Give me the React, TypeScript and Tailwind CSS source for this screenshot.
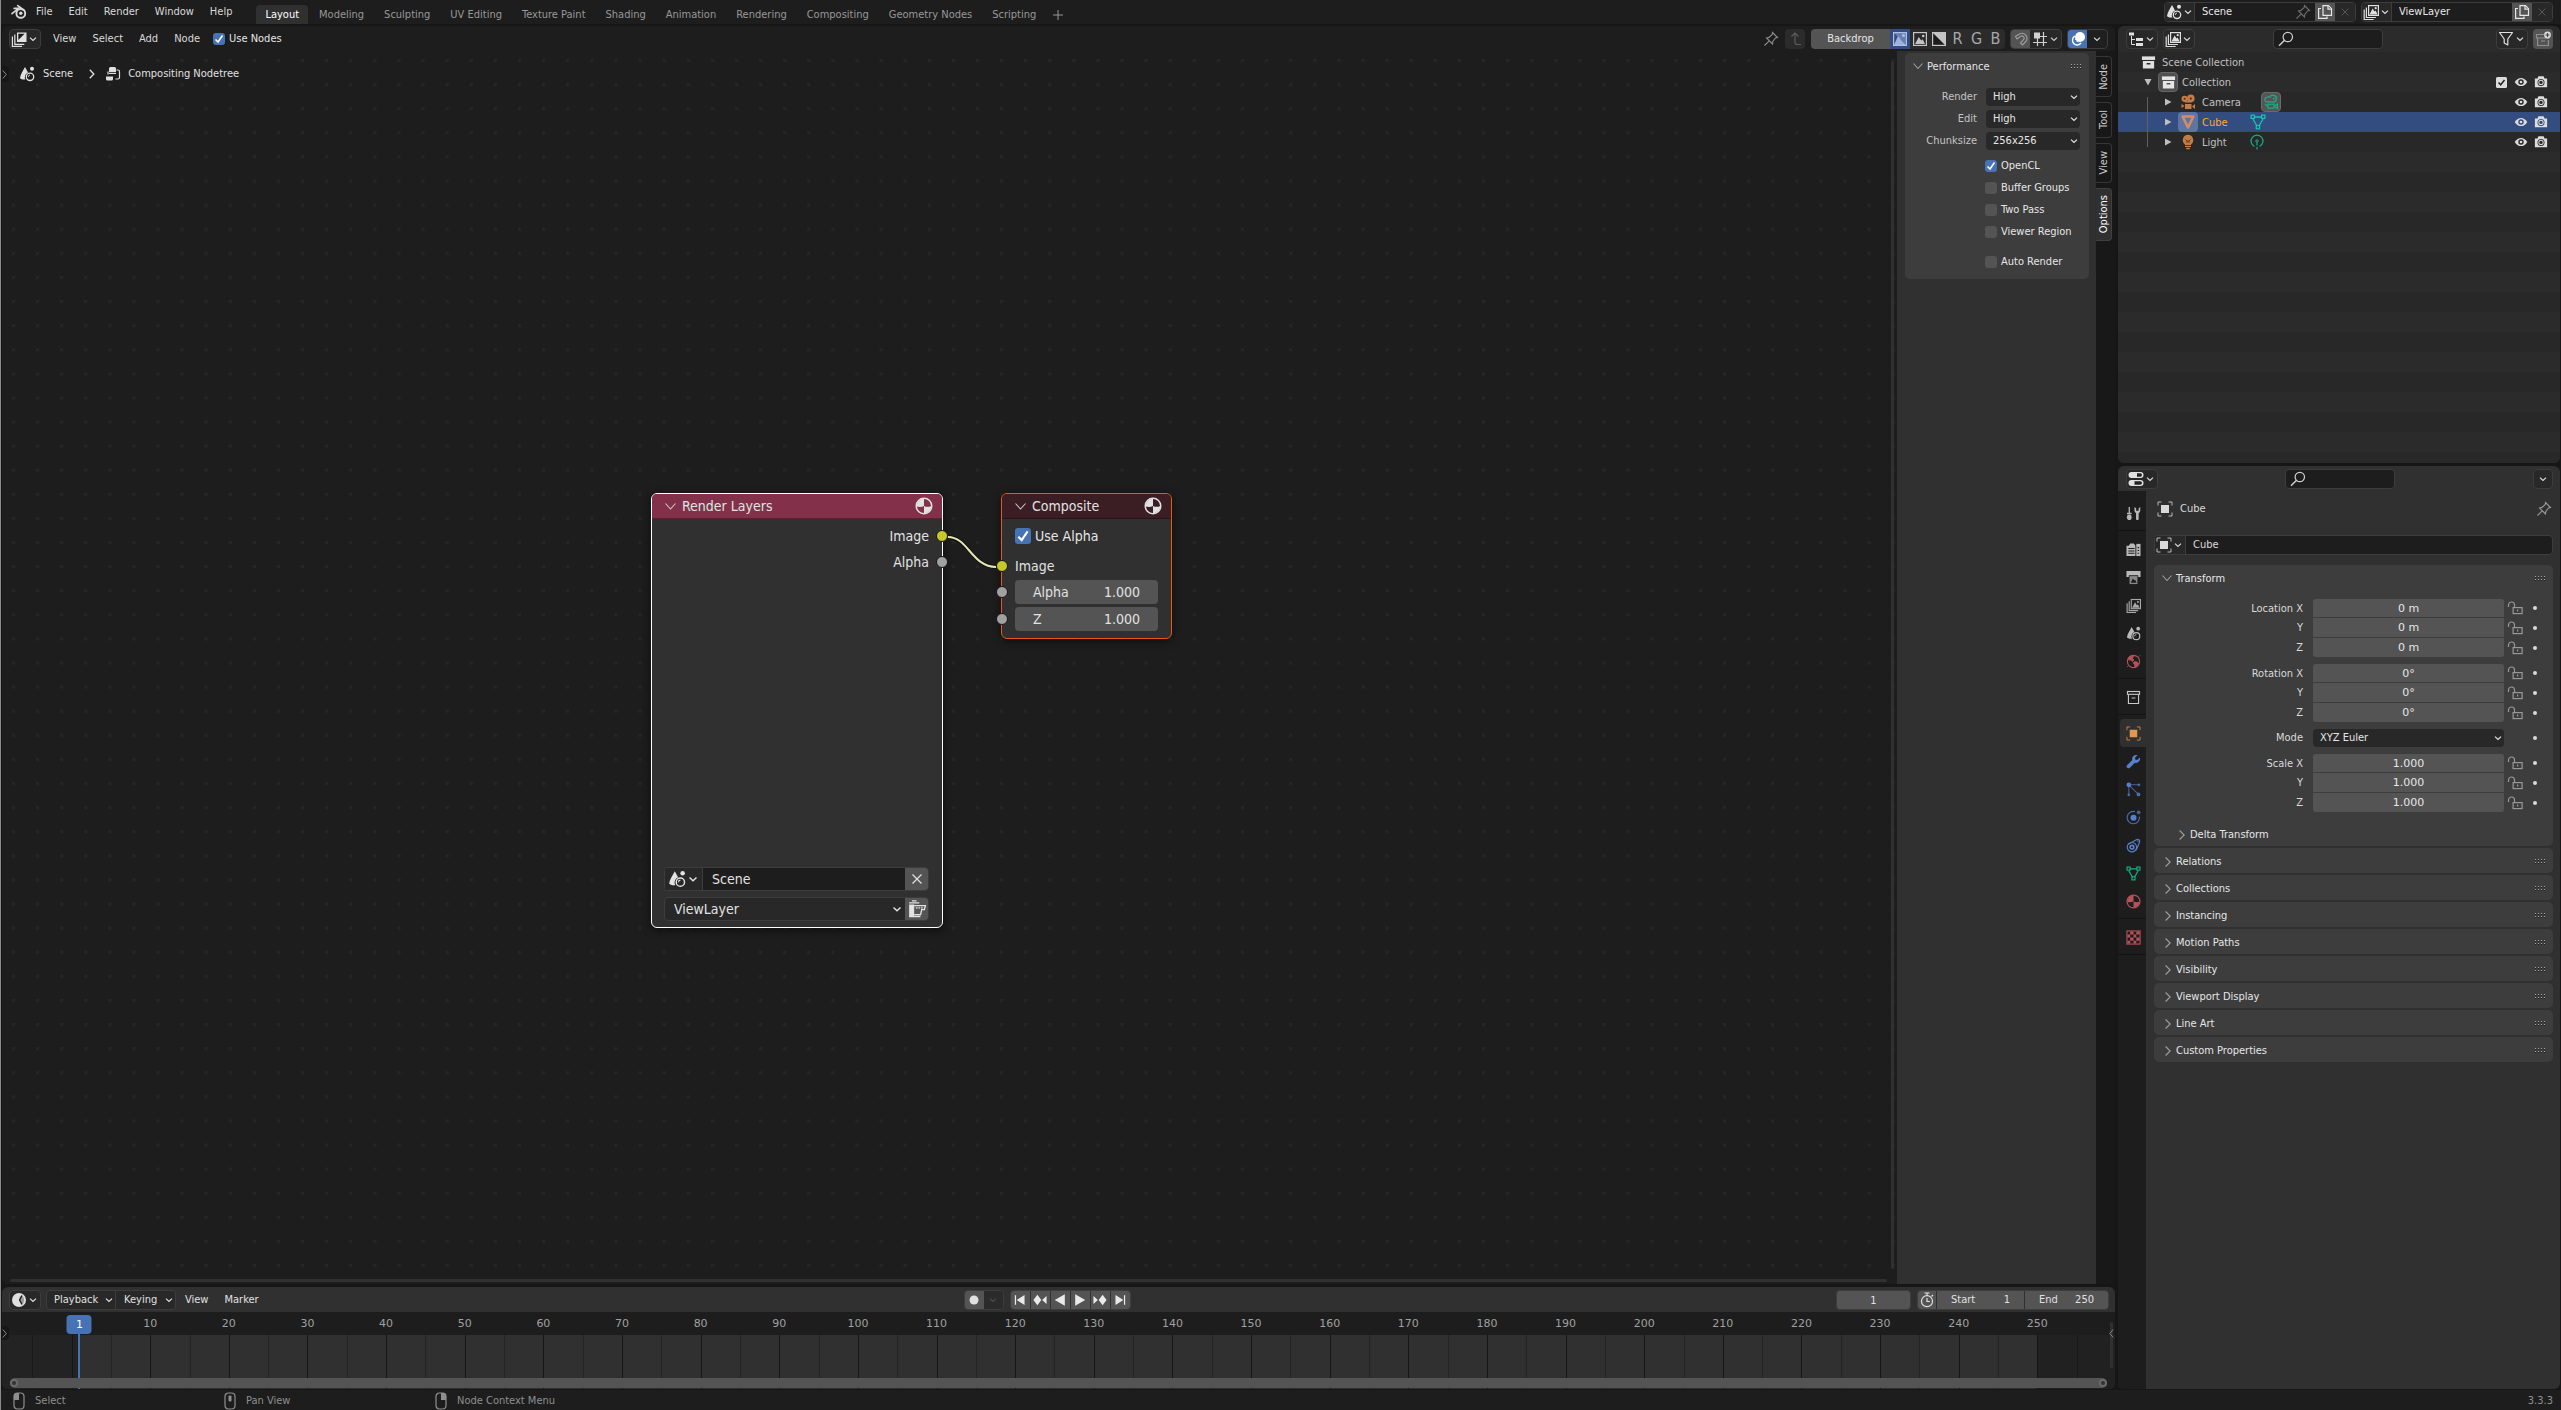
import React from "react";

/* ---------- icons, all on a 16 unit grid ---------- */

const line = { fill: "none", stroke: "currentColor", strokeWidth: 1.2 } as const;

const shapes: Record<string, React.ReactNode> = {
  blender: (
    <>
      <path d="M1 9.6 7.6 4.4H3.2M6.8 1.6 12.6 6" fill="none" stroke="currentColor" strokeWidth="1.7" strokeLinecap="round" strokeLinejoin="round" />
      <circle cx="9.8" cy="9.4" r="4.4" fill="none" stroke="currentColor" strokeWidth="1.9" />
      <circle cx="9.8" cy="9.3" r="1.7" fill="currentColor" />
    </>
  ),
  chevronDown: <path d="M4 6.2 8 10l4-3.8" fill="none" stroke="currentColor" strokeWidth="1.6" />,
  scene: (
    <>
      <path d="M6 1 9 6.5A5 5 0 0 0 6.4 13.5C4 13.8 2 13.3 1 12 1.5 8 4 5 6 1Z" fill="currentColor" />
      <circle cx="13" cy="2.8" r="2" fill="currentColor" />
      <circle cx="11" cy="10.8" r="3.7" {...line} strokeWidth="1.3" />
      <path d="M9.2 11a2 2 0 0 1 1.8-2" {...line} strokeWidth="0.9" />
    </>
  ),
  layers: (
    <>
      <rect x="5.6" y="1.6" width="9.8" height="9.8" {...line} />
      <path d="M6.5 10.5 9.6 4.6l2 3 1.1-1 1.8 3.9Z" fill="currentColor" />
      <circle cx="12.7" cy="4.2" r="1.1" fill="currentColor" />
      <path d="M3.4 3.5v10h9.5M1.2 5.5v10h9.5" {...line} />
    </>
  ),
  compositor: (
    <>
      <path d="M6 1.5h9.5v9.5H6Z" fill="currentColor" />
      <path d="M7.3 2.8h6.3L7.3 9Z" fill="#1b1b1b" />
      <path d="M3.8 3.5v9.8h9.5M1.4 5.5v9.9h9.6" {...line} />
    </>
  ),
  nodetree: (
    <>
      <path d="M4 2.5A1.5 1.5 0 0 1 5.5 1h4A1.5 1.5 0 0 1 11 2.5V6H4ZM1 10.5h7V13a1.5 1.5 0 0 1-1.5 1.5h-4A1.5 1.5 0 0 1 1 13Z" fill="currentColor" />
      <rect x="4" y="6.8" width="7" height="1.2" fill="currentColor" />
      <path d="M3 8.5v-3M11.5 4H13a1.5 1.5 0 0 1 1.5 1.5v6A1.5 1.5 0 0 1 13 13h-2.5" {...line} />
    </>
  ),
  pin: <path d="M9.5 1.5 14.5 6.5 12.5 7 9.8 10.5 9.5 13 3.5 7 6 6.4 9.2 3.5ZM6.3 9.8 1.5 14.5" {...line} strokeWidth="1.1" />,
  copy: (
    <>
      <path d="M6 1.7h5.5L14.5 4.7V11.4H6Z" {...line} />
      <path d="M11 1.7V5.2h3.5" {...line} />
      <path d="M4 4.5H1.6V14.4H10V12.5" {...line} />
    </>
  ),
  close: <path d="M3.5 3.5 12.5 12.5M12.5 3.5 3.5 12.5" {...line} />,
  up: <path d="M4.5 5.5 8 2l3.5 3.5M8 2v9a2.5 2.5 0 0 0 2.5 2.5H14" {...line} />,
  colorAlpha: (
    <>
      <rect x="1.6" y="1.6" width="12.8" height="12.8" {...line} />
      <path d="M2 14 6 5l3.5 4.5L14 14Z" fill="currentColor" opacity="0.9" />
      <path d="M2 2h12v12Z" fill="currentColor" opacity="0.45" />
      <circle cx="11.5" cy="4.5" r="1.5" fill="currentColor" />
    </>
  ),
  color: (
    <>
      <rect x="1.6" y="1.6" width="12.8" height="12.8" {...line} />
      <path d="M3 13 6.8 6l2.4 3.5 1.5-1.2L13 13Z" fill="currentColor" />
      <circle cx="11.2" cy="5" r="1.3" fill="currentColor" />
    </>
  ),
  alpha: (
    <>
      <path d="M2 2 14 14H2Z" fill="#1c1c1c" />
      <path d="M2 2H14V14Z" fill="currentColor" />
      <rect x="1.6" y="1.6" width="12.8" height="12.8" {...line} />
    </>
  ),
  magnet: <path d="M2.5 5.5 6.5 3a5 5 0 0 1 6.3 7.5L9.5 14 7.5 12l3-3.3A2.2 2.2 0 0 0 7.5 5.5L4 8Z" {...line} />,
  snapGrid: (
    <>
      <path d="M5.5 7v8M11.5 1v14M7 5.5h8M1 11.5h14" {...line} />
      <rect x="2" y="1.5" width="6" height="6" fill="currentColor" />
    </>
  ),
  overlay: (
    <>
      <circle cx="10" cy="6" r="5" fill="currentColor" />
      <path d="M4.8 5.2A4.7 4.7 0 1 0 11 12" fill="none" stroke="currentColor" strokeWidth="1.4" />
      <path d="M5.6 7.5a4 4 0 0 0 3.5 3.6" fill="none" stroke="currentColor" strokeWidth="1.2" strokeDasharray="1.5 1" />
    </>
  ),
  sphere: (
    <>
      <circle cx="8" cy="8" r="6.9" {...line} strokeWidth="1.3" />
      <path d="M8 1.5V8C6 9 3.5 9 1.6 8.4A6.5 6.5 0 0 1 8 1.5ZM8 8c2 1 4.5 1 6.5 0A6.5 6.5 0 0 1 8 14.5Z" fill="currentColor" />
    </>
  ),
  outliner: (
    <>
      <rect x="1" y="1.5" width="5" height="3" fill="currentColor" />
      <rect x="8" y="7" width="7" height="3" fill="currentColor" />
      <rect x="8" y="12" width="7" height="3" fill="currentColor" />
      <path d="M3.5 5v8.5H7M3.5 8.5H7" {...line} strokeWidth="1" />
    </>
  ),
  filter: <path d="M1.5 1.5h13L9.8 8v6L6.2 12V8Z" {...line} strokeLinejoin="round" />,
  newCollection: (
    <>
      <path d="M9 3.5H1.5V7h13M2.6 7v7.5h10.8V9M6 10h4" {...line} />
      <circle cx="12.5" cy="4" r="3.4" fill="#d8d8d8" />
      <path d="M12.5 2v4M10.5 4h4" stroke="#444" strokeWidth="1.1" />
    </>
  ),
  search: (
    <>
      <circle cx="9.8" cy="6" r="4.7" {...line} />
      <path d="M6.3 9.5 1 14.8" {...line} strokeWidth="1.5" />
    </>
  ),
  collection: (
    <>
      <rect x="1" y="1.5" width="14" height="3.8" fill="currentColor" />
      <path d="M2 6.3h12v8H2ZM6 8.5v1.5h4V8.5Z" fill="currentColor" fillRule="evenodd" />
    </>
  ),
  collectionLine: (
    <>
      <rect x="1.6" y="1.6" width="12.8" height="3" {...line} />
      <path d="M2.6 4.8v9.6h10.8V4.8M6 8.5h4" {...line} />
    </>
  ),
  camera: (
    <>
      <circle cx="4.6" cy="4.8" r="3.1" fill="currentColor" />
      <circle cx="10.8" cy="4.4" r="3.8" fill="currentColor" />
      <rect x="5" y="7" width="6.5" height="1.5" fill="currentColor" />
      <rect x="5" y="10" width="6.5" height="5" fill="currentColor" />
      <path d="M12 12.5 15 10v5ZM1.5 10l3 2-3 2Z" fill="currentColor" />
      <circle cx="4.6" cy="4.8" r="1" fill="#4a2f1a" />
      <circle cx="10.8" cy="4.6" r="1.1" fill="#4a2f1a" />
    </>
  ),
  cameraLine: (
    <>
      <path d="M4 3.3a2.3 2.3 0 1 0 1 4.4l5 .5a3.5 3.5 0 1 0-3.3-5A2.5 2.5 0 0 0 4 3.3Z" {...line} />
      <rect x="5" y="10.2" width="6" height="4" {...line} />
      <path d="M11.5 12 14.5 10v4.5ZM2 10l2.5 2.2" {...line} />
      <circle cx="10.8" cy="4.7" r="0.9" fill="currentColor" />
    </>
  ),
  meshObject: <path d="M2.6 2.5h10.8L8 13.5Z" fill="none" stroke="currentColor" strokeWidth="2.6" strokeLinejoin="round" />,
  mesh: (
    <>
      <path d="M4 3h8M3 5l4 7M13 5 9 12" {...line} strokeWidth="1.3" />
      <rect x="1.1" y="1.1" width="3.3" height="3.3" {...line} />
      <rect x="11.6" y="1.1" width="3.3" height="3.3" {...line} />
      <rect x="6.3" y="11.5" width="3.3" height="3.3" {...line} />
    </>
  ),
  bulb: (
    <>
      <path d="M8 .8a5.3 5.3 0 0 0-3 9.6V11h6v-.6A5.3 5.3 0 0 0 8 .8Z" fill="currentColor" />
      <path d="M5 12.3h6M6.2 14.5h3.6" {...line} strokeWidth="1.3" />
      <path d="M5.5 5.5 7 7h2l1.5-1.5M7 7v2M9 7v2" fill="none" stroke="#5a3a20" strokeWidth="0.9" />
    </>
  ),
  lightData: (
    <>
      <path d="M5.5 12.5a6 6 0 1 1 5 0" {...line} />
      <circle cx="8" cy="7" r="1.2" {...line} strokeWidth="1" />
      <path d="M8 8.5v3M8 13v2.5" {...line} />
    </>
  ),
  eye: (
    <>
      <path d="M.8 8C3 4.5 5.500 3.3 8 3.3S13 4.5 15.2 8C13 11.5 10.5 12.7 8 12.7S3 11.5.8 8Z" fill="currentColor" />
      <circle cx="8" cy="8" r="3.1" fill="var(--hole)" />
      <circle cx="8" cy="8" r="1.5" fill="currentColor" />
    </>
  ),
  photo: (
    <>
      <path d="M1 4h3l1-2.5h6L12 4h3v10H1Z" fill="currentColor" />
      <circle cx="8" cy="8.5" r="4" fill="var(--hole)" />
      <circle cx="8" cy="8.5" r="3" fill="currentColor" />
      <circle cx="8" cy="8.5" r="1.9" fill="var(--hole)" />
    </>
  ),
  properties: (
    <>
      <rect x="0.5" y="1" width="15" height="6" rx="3" fill="currentColor" />
      <rect x="0.5" y="9" width="15" height="6" rx="3" fill="currentColor" />
      <path d="M9 2.3h3.3a1.7 1.7 0 0 1 0 3.4H9ZM6.5 10.3h5.8a1.7 1.7 0 0 1 0 3.4H6.5Z" fill="#222" />
    </>
  ),
  object: (
    <>
      <rect x="4" y="4" width="8" height="8" fill="currentColor" />
      <path d="M1 4.5V1h3.5M11.5 1H15v3.5M15 11.5V15h-3.5M4.5 15H1v-3.5" fill="none" stroke="currentColor" strokeWidth="1" opacity="0.8" />
    </>
  ),
  tool: (
    <>
      <path d="M3.5 1v7M1 8h5" {...line} strokeWidth="1.4" />
      <ellipse cx="3.5" cy="12" rx="2.5" ry="3" fill="currentColor" />
      <path d="M9 1v4a3 3 0 0 0 1.7 2.5V14a1.5 1.5 0 0 0 2.8 0V7.5A3 3 0 0 0 15.2 5V1l-1.7 1.5V5h-2.700V2.5Z" fill="currentColor" />
    </>
  ),
  render: (
    <>
      <path d="M.5 4H3L4.5 1.5h4L10 4v11H.5Z" fill="currentColor" />
      <path d="M11 2h4.5v13H11Z" fill="currentColor" />
      <path d="M2.5 7H9M2.5 9.5H9M2.5 12H9M12.3 6H14M12.3 9H14M12.3 12H14" stroke="#1d1d1d" strokeWidth="1.1" />
    </>
  ),
  output: (
    <>
      <path d="M.5 1h15v6.5H13V5.5H3v2H.5Z" fill="currentColor" />
      <path d="M3.8 6.5h8.4V15H3.8Z" fill="currentColor" opacity="0.7" />
      <path d="M5 13.5 7.3 9l1.5 2 1-.6 1.4 3.1Z" fill="#1d1d1d" />
    </>
  ),
  world: (
    <>
      <circle cx="8" cy="8" r="6.5" {...line} />
      <path d="M2.5 4 5 2l3 .5L7 5 8.5 6.5 6.5 8l-1-1.5H3ZM9 8l3 .5 1.5 2L11 13.5 9.5 14 9 11 7.5 9.5ZM1 14l1.5-1.5M13.5 3 15.2 1.3" fill="currentColor" stroke="currentColor" strokeWidth="0.8" />
    </>
  ),
  wrench: <path d="M14.7 3.6 12 6.3 9.9 5.9 9.6 4 12.3 1.3A4.3 4.3 0 0 0 6.7 6.5L1.3 11.8a1.9 1.9 0 0 0 2.8 2.8L9.5 9.3a4.3 4.3 0 0 0 5.2-5.7Z" fill="currentColor" />,
  particles: (
    <>
      <path d="M3 3h11M3 3v11M3 3l10 10" fill="none" stroke="currentColor" strokeWidth="1.1" opacity="0.7" />
      <circle cx="3" cy="3" r="2.5" fill="currentColor" />
      <circle cx="13.8" cy="3" r="1.5" fill="currentColor" opacity="0.7" />
      <circle cx="3" cy="13.8" r="1.5" fill="currentColor" opacity="0.7" />
      <circle cx="13.3" cy="13.3" r="2" fill="currentColor" opacity="0.8" />
    </>
  ),
  physics: (
    <>
      <path d="M9.5 1.7A6.6 6.6 0 1 0 14.3 7" {...line} opacity="0.8" />
      <circle cx="8" cy="8.3" r="3.2" fill="currentColor" />
      <circle cx="13.5" cy="2.5" r="2" fill="currentColor" opacity="0.7" />
    </>
  ),
  constraint: (
    <>
      <path d="M2 7 11.5 1.5a2.3 2.3 0 0 1 3 3L10.8 13" {...line} />
      <circle cx="6.3" cy="9.8" r="5" {...line} />
      <circle cx="6.3" cy="9.8" r="2" fill="none" stroke="currentColor" strokeWidth="1.8" />
      <circle cx="12.8" cy="3.2" r="0.9" fill="currentColor" />
    </>
  ),
  texture: (
    <>
      <rect x="1" y="1" width="14" height="14" fill="none" stroke="currentColor" strokeWidth="1.2" />
      <path d="M4.5 1.5H8v3.3H4.5ZM11 1.5h3.5v3.3H11ZM1.5 4.8h3v3.3h-3ZM8 4.8h3v3.3H8ZM4.5 8.1H8v3.3H4.5ZM11 8.1h3.5v3.3H11ZM1.5 11.4h3v3.1h-3ZM8 11.4h3v3.1H8Z" fill="currentColor" />
    </>
  ),
  unlock: (
    <>
      <path d="M1.5 7V5a3 3 0 0 1 6 0v3" {...line} />
      <rect x="6.1" y="7.6" width="9" height="6" {...line} />
      <path d="M10.6 9.5v2" {...line} />
    </>
  ),
  clock: (
    <>
      <circle cx="8" cy="8" r="7" fill="currentColor" />
      <path d="M10.5 3.5 8.5 5v4l2.5 3.5A5.5 5.5 0 0 0 10.5 3.5Z" fill="#999" />
      <path d="M11 3.5 8.6 8l2.4 4.5" fill="none" stroke="#222" strokeWidth="1.4" />
    </>
  ),
  stopwatch: (
    <>
      <circle cx="8" cy="9.2" r="5.5" {...line} />
      <path d="M8 6v3.5h3M5.5 1h5M8 1v2.5M12.5 4.5 14 3" {...line} />
    </>
  ),
  renderLayer: (
    <>
      <path d="M1 4h4.5v11H1Z" fill="currentColor" />
      <path d="M1 2.5h9M3.5.8h4" {...line} />
      <path d="M5.5 5h10L14.5 8.5h-2.3l-1 4.5H5.5M1 14.7h10" {...line} />
      <path d="M7 7h7" {...line} strokeDasharray="1.5 0.8" />
    </>
  ),
  first: <path d="M2.8 2.5v11M12.5 3.5v9L5.5 8Z" fill="currentColor" stroke="currentColor" strokeWidth="1.4" />,
  last: <path d="M13.2 2.5v11M3.5 3.5v9L10.5 8Z" fill="currentColor" stroke="currentColor" strokeWidth="1.4" />,
  prevKey: <path d="M5 2 9.5 8 5 14 .5 8ZM15.5 3.5v9L10.5 8Z" fill="currentColor" />,
  nextKey: <path d="M11 2 15.5 8 11 14 6.5 8ZM.5 3.5v9L5.5 8Z" fill="currentColor" />,
  playBack: <path d="M13.5 1.5v13L2 8Z" fill="currentColor" />,
  play: <path d="M2.5 1.5v13L14 8Z" fill="currentColor" />,
  record: <circle cx="8" cy="8" r="4.5" fill="currentColor" />,
};

function Icon({ name, className = "size-4" }: { name: string; className?: string }) {
  return (
    <svg viewBox="0 0 16 16" aria-hidden="true" className={`shrink-0 ${className}`}>
      {shapes[name]}
    </svg>
  );
}

function Mouse({ part }: { part: "left" | "middle" | "right" }) {
  return (
    <svg viewBox="0 0 12 18" aria-hidden="true" className="h-[18px] w-3 shrink-0 text-[#8f8f8f]">
      <rect x="1" y="1" width="10" height="16" rx="3.5" fill="none" stroke="currentColor" strokeWidth="1.2" />
      {part === "left" && <path d="M1 8V4a3 3 0 0 1 3-3h2v7Z" fill="currentColor" />}
      {part === "middle" && <rect x="4.5" y="3.5" width="3" height="6" rx="1" fill="currentColor" />}
      {part === "right" && <path d="M11 8V4a3 3 0 0 0-3-3H6v7Z" fill="currentColor" />}
    </svg>
  );
}

function Grip() {
  return (
    <svg viewBox="0 0 11 5" aria-hidden="true" className="h-[5px] w-[11px] text-[#a8a8a8]">
      {[0, 3, 6, 9].map((x) =>
        [0, 3].map((y) => (
          <React.Fragment key={`${x}-${y}`}>
            <rect x={x} y={y} width="1" height="1" fill="currentColor" />
            <rect x={x} y={y + 1} width="1" height="1" fill="#1e1e1e" />
          </React.Fragment>
        ))
      )}
    </svg>
  );
}

/* ---------- controls ---------- */

const box = "flex shrink-0 items-center rounded border border-[#3d3d3d] bg-[#282828]";

function TypeButton({ icon, label, className = "w-8" }: { icon: string; label: string; className?: string }) {
  return (
    <button aria-label={label} className={`${box} h-5 justify-center text-[#e0e0e0] ${className}`}>
      <Icon name={icon} />
      <Icon name="chevronDown" className="size-3" />
    </button>
  );
}

function Check({ label, on = false, big = false }: { label: string; on?: boolean; big?: boolean }) {
  return (
    <label className="flex items-center gap-1 text-[#e6e6e6]">
      <span className="grid place-items-center">
        <input
          type="checkbox"
          defaultChecked={on}
          className={`col-start-1 row-start-1 appearance-none rounded-[3px] bg-[#545454] checked:bg-[#4772b3] ${big ? "size-4" : "size-3"}`}
        />
        {on && (
          <svg viewBox="0 0 12 12" aria-hidden="true" className={`pointer-events-none col-start-1 row-start-1 text-white ${big ? "size-4" : "size-3"}`}>
            <path d="M2.5 6.5 5 9l4.5-6.5" fill="none" stroke="currentColor" strokeWidth="1.6" />
          </svg>
        )}
      </span>
      {label}
    </label>
  );
}

function Select({ label, value, className }: { label: string; value: string; className: string }) {
  return (
    <span className={`flex items-center rounded bg-[#282828] text-[#e6e6e6] ${className}`}>
      <select aria-label={label} defaultValue={value} className="h-full min-w-0 flex-1 appearance-none pl-[7px] outline-none">
        <option>{value}</option>
      </select>
      <Icon name="chevronDown" className="size-3" />
    </span>
  );
}

function SearchBox({ label }: { label: string }) {
  return (
    <div className="flex h-5 w-[110px] items-center rounded border border-[#3d3d3d] bg-[#1d1d1d] pl-1 text-[#d0d0d0]">
      <Icon name="search" />
      <input aria-label={label} type="search" className="h-full min-w-0 flex-1 bg-transparent outline-none" />
    </div>
  );
}

/* ---------- top bar ---------- */

const workspaces = ["Layout", "Modeling", "Sculpting", "UV Editing", "Texture Paint", "Shading", "Animation", "Rendering", "Compositing", "Geometry Nodes", "Scripting"];

function DataBlock({ icon, name, pinned, className }: { icon: string; name: string; pinned?: boolean; className: string }) {
  return (
    <div className={`flex h-5 items-stretch overflow-hidden rounded border border-[#3d3d3d] bg-[#1d1d1d] ${className}`}>
      <button aria-label={`Browse ${name}`} className="flex w-[30px] items-center justify-center border-r border-[#3d3d3d] bg-[#282828] text-[#e0e0e0]">
        <Icon name={icon} />
        <Icon name="chevronDown" className="size-3" />
      </button>
      <input aria-label={name} defaultValue={name} className="min-w-0 flex-1 bg-transparent pl-[7px] text-[#e6e6e6] outline-none" />
      {pinned && (
        <button aria-label="Pin scene" className="pr-1 text-[#6c6c6c]">
          <Icon name="pin" />
        </button>
      )}
      <button aria-label={`New ${name}`} className="flex w-5 items-center justify-center bg-[#545454] text-[#e6e6e6]">
        <Icon name="copy" />
      </button>
      <button aria-label={`Remove ${name}`} className="flex w-5 items-center justify-center bg-[#282828] text-[#5c5c5c]">
        <Icon name="close" className="size-3" />
      </button>
    </div>
  );
}

function TopBar() {
  return (
    <header className="flex h-6 shrink-0 bg-[#1d1d1d] pr-2 text-[#d9d9d9]">
      <button aria-label="Blender" className="ml-2.5">
        <Icon name="blender" className="size-4" />
      </button>
      <nav aria-label="Main menu" className="ml-[9px] flex items-center gap-4">
        {["File", "Edit", "Render", "Window", "Help"].map((m) => (
          <button key={m}>{m}</button>
        ))}
      </nav>
      <nav aria-label="Workspaces" className="ml-6 flex gap-0.5 pt-[5px] text-[#989898]">
        {workspaces.map((w, i) => (
          <button key={w} className={`px-[9px] ${i === 0 ? "rounded-t bg-[#303030] text-white" : ""}`}>
            {w}
          </button>
        ))}
        <button aria-label="Add workspace" className="pl-1.5">
          <svg viewBox="0 0 10 10" className="size-2.5">
            <path d="M5 0v10M0 5h10" stroke="currentColor" fill="none" />
          </svg>
        </button>
      </nav>
      <div className="ml-auto flex items-center gap-[5px]">
        <DataBlock icon="scene" name="Scene" pinned className="w-48" />
        <DataBlock icon="layers" name="ViewLayer" className="w-48" />
      </div>
    </header>
  );
}

/* ---------- compositor ---------- */

function EditorHeader() {
  return (
    <div className="flex h-[25px] shrink-0 items-center pl-[7px] pr-[7px] pt-px text-[#d9d9d9]">
      <TypeButton icon="compositor" label="Editor type" />
      <div className="ml-3 flex gap-4">
        {["View", "Select", "Add", "Node"].map((m) => (
          <button key={m}>{m}</button>
        ))}
      </div>
      <div className="ml-[13px]">
        <Check label="Use Nodes" on />
      </div>
      <button aria-label="Pin" className="ml-auto text-[#8a8a8a]">
        <Icon name="pin" />
      </button>
      <button aria-label="Parent node tree" className="ml-1.5 flex h-5 w-5 items-center justify-center rounded bg-[#2b2b2b] text-[#5c5c5c]">
        <Icon name="up" />
      </button>
      <div className="ml-1.5 flex h-5 overflow-hidden rounded text-[#c4c4c4]">
        <button className="w-[79px] bg-[#545454] text-[#e6e6e6]">Backdrop</button>
        <button aria-label="Color and alpha" className="flex w-5 items-center justify-center bg-[#334d80] text-[#a9bfe6]">
          <Icon name="colorAlpha" />
        </button>
        <button aria-label="Color" className="flex w-[19px] items-center justify-center bg-[#2b2b2b]">
          <Icon name="color" />
        </button>
        <button aria-label="Alpha" className="flex w-[19px] items-center justify-center bg-[#2b2b2b]">
          <Icon name="alpha" />
        </button>
        {["R", "G", "B"].map((c) => (
          <button key={c} className="w-[19px] bg-[#2b2b2b] text-base leading-5 text-[#a8a8a8]">
            {c}
          </button>
        ))}
      </div>
      <div className="ml-[5px] flex h-5 overflow-hidden rounded border border-[#3d3d3d] bg-[#282828]">
        <button aria-label="Snap" className="flex w-[19px] items-center justify-center bg-[#545454] text-[#9c9c9c]">
          <Icon name="magnet" />
        </button>
        <button aria-label="Snap element" className="flex w-[31px] items-center justify-center text-[#d0d0d0]">
          <Icon name="snapGrid" />
          <Icon name="chevronDown" className="size-3" />
        </button>
      </div>
      <div className="ml-[5px] flex h-5 overflow-hidden rounded border border-[#3d3d3d] bg-[#1f1f1f]">
        <button aria-label="Overlays" className="flex w-[19px] items-center justify-center bg-[#4772b3] text-white">
          <Icon name="overlay" />
        </button>
        <button aria-label="Overlay options" className="flex w-5 items-center justify-center">
          <Icon name="chevronDown" className="size-3" />
        </button>
      </div>
    </div>
  );
}

function Socket({ color, side }: { color: string; side: "left" | "right" }) {
  return (
    <span className={`absolute top-1/2 size-3 -translate-y-1/2 rounded-full border border-[#181818] ${color} ${side === "left" ? "-left-[6px]" : "-right-[6px]"}`} />
  );
}

function NodeHeader({ title, className }: { title: string; className: string }) {
  return (
    <div className={`flex h-[25px] shrink-0 items-center rounded-t-[5px] border-b pl-[13px] pr-[9px] ${className}`}>
      <svg viewBox="0 0 11 7" aria-hidden="true" className="h-[7px] w-[11px]">
        <path d="m.5.5 5 5.5 5-5.5" fill="none" stroke="#c8c8c8" strokeWidth="1.1" />
      </svg>
      <h2 className="ml-1.5">{title}</h2>
      <Icon name="sphere" className="ml-auto size-[18px]" />
    </div>
  );
}

function Nodes() {
  return (
    <div className="text-sm leading-5 text-[#e2e2e2]">
      <section className="absolute left-[649px] top-[442px] flex h-[435px] w-[292px] flex-col rounded-md border border-white bg-[#303030] pb-[6px] shadow-[0_2px_8px_rgba(0,0,0,0.6)]">
        <NodeHeader title="Render Layers" className="border-[#5c2034] bg-[#83314a]" />
        <div className="relative mt-1 flex h-[26px] items-center justify-end pr-[13px]">
          Image
          <Socket color="bg-[#c7c729]" side="right" />
        </div>
        <div className="relative flex h-[26px] items-center justify-end pr-[13px]">
          Alpha
          <Socket color="bg-[#a1a1a1]" side="right" />
        </div>
        <div className="ml-3 mr-[13px] mt-auto flex h-6 overflow-hidden rounded border border-[#3d3d3d] bg-[#1d1d1d]">
          <button aria-label="Browse scene" className="flex w-[38px] items-center justify-center border-r border-[#3d3d3d] bg-[#282828]">
            <Icon name="scene" className="size-[18px]" />
            <Icon name="chevronDown" className="size-[14px]" />
          </button>
          <input aria-label="Scene" defaultValue="Scene" className="min-w-0 flex-1 bg-transparent pl-[9px] outline-none" />
          <button aria-label="Unlink scene" className="flex w-[23px] items-center justify-center bg-[#545454]">
            <Icon name="close" />
          </button>
        </div>
        <div className="ml-3 mr-[13px] mt-[6px] flex h-6 overflow-hidden rounded border border-[#3d3d3d] bg-[#282828]">
          <select aria-label="View layer" className="min-w-0 flex-1 appearance-none pl-[9px] outline-none">
            <option>ViewLayer</option>
          </select>
          <Icon name="chevronDown" className="mr-px mt-1 size-[14px]" />
          <button aria-label="Render layer" className="flex w-[23px] items-center justify-center bg-[#545454]">
            <Icon name="renderLayer" className="size-[18px]" />
          </button>
        </div>
      </section>

      <section className="absolute left-[999px] top-[442px] flex w-[171px] flex-col rounded-md border border-[#e35a10] bg-[#303030] pb-[7px] shadow-[0_2px_8px_rgba(0,0,0,0.6)]">
        <NodeHeader title="Composite" className="border-[#2a1218] bg-[#3b1d24]" />
        <div className="mt-1 flex h-[26px] items-center pl-[13px]">
          <Check label="Use Alpha" on big />
        </div>
        <div className="relative mb-px mt-1 flex h-[26px] items-center pl-[13px]">
          Image
          <Socket color="bg-[#c7c729]" side="left" />
        </div>
        {["Alpha", "Z"].map((name) => (
          <div key={name} className="relative mb-[3px] px-[13px] last:mb-0">
            <label className="flex h-6 items-center rounded bg-[#545454] px-[18px]">
              {name}
              <input defaultValue="1.000" className="w-full min-w-0 flex-1 bg-transparent text-right outline-none" />
            </label>
            <Socket color="bg-[#a1a1a1]" side="left" />
          </div>
        ))}
      </section>

      <svg aria-hidden="true" viewBox="0 0 48 40" className="absolute left-[946px] top-[481px] h-10 w-12">
        <path d="M0 5C20 5 24 35 48 35" fill="none" stroke="#111" strokeWidth="4" />
        <path d="M0 5C20 5 24 35 48 35" fill="none" stroke="#e6e6b4" strokeWidth="2" />
      </svg>
    </div>
  );
}

function Canvas() {
  return (
    <div className="relative min-w-0 flex-1 overflow-hidden">
      <svg aria-hidden="true" className="absolute inset-0 size-full">
        <defs>
          <pattern id="dots" x="9.9" y="8" width="24.1" height="24.1" patternUnits="userSpaceOnUse">
            <rect width="3" height="3" fill="#262626" />
          </pattern>
        </defs>
        <rect width="100%" height="100%" fill="url(#dots)" />
      </svg>
      <div className="relative flex items-center pl-[17px] pt-[15px] text-[#e0e0e0]">
        <Icon name="scene" />
        <span className="ml-2">Scene</span>
        <svg viewBox="0 0 6 10" aria-hidden="true" className="ml-4 h-2.5 w-1.5">
          <path d="m.8.8 4 4.2-4 4.2" fill="none" stroke="currentColor" strokeWidth="1.3" />
        </svg>
        <Icon name="nodetree" className="ml-2.5 size-4" />
        <span className="ml-[7px]">Compositing Nodetree</span>
      </div>
      <button aria-label="Show toolbar" className="absolute left-0 top-[15px] h-4 w-[7px] rounded-r bg-[#161616]">
        <svg viewBox="0 0 5 9" className="h-[9px] w-[5px]">
          <path d="m.8.5 3.5 4-3.5 4" fill="none" stroke="#8a8a8a" />
        </svg>
      </button>
      <Nodes />
      <div className="absolute bottom-[15px] right-[3px] top-2.5 w-[3px] rounded bg-[#303030]" />
      <div className="absolute bottom-0.5 left-2 right-2.5 h-[3px] rounded bg-[#303030]" />
    </div>
  );
}

function Sidebar() {
  return (
    <aside className="w-[199px] shrink-0 bg-[#303030] pl-2 pr-[7px] pt-0.5">
      <section className="rounded-[5px] bg-[#3d3d3d] pb-[6px] text-[#d9d9d9]">
        <div className="flex h-[26px] items-center pl-2 pr-[7px] pt-px">
          <svg viewBox="0 0 10 7" aria-hidden="true" className="h-[7px] w-2.5">
            <path d="m.5.5 4.5 5 4.5-5" fill="none" stroke="#a0a0a0" strokeWidth="1.1" />
          </svg>
          <h2 className="ml-1 flex-1 text-[#e6e6e6]">Performance</h2>
          <Grip />
        </div>
        <div className="flex flex-col pt-[7px]">
          {[
            ["Render", "High"],
            ["Edit", "High"],
            ["Chunksize", "256x256"],
          ].map(([label, value]) => (
            <div key={label} className="grid h-[22px] grid-cols-[72px_94px] items-center gap-x-[9px]">
              <span className="text-right text-[#c4c4c4]">{label}</span>
              <Select label={label} value={value} className="h-[18px]" />
            </div>
          ))}
          <div className="flex flex-col pl-20 pt-[3px]">
            {["OpenCL", "Buffer Groups", "Two Pass", "Viewer Region"].map((l) => (
              <div key={l} className="flex h-[22px] items-center">
                <Check label={l} on={l === "OpenCL"} />
              </div>
            ))}
            <div className="mt-2 flex h-[22px] items-center">
              <Check label="Auto Render" />
            </div>
          </div>
        </div>
      </section>
    </aside>
  );
}

function SideTabs() {
  return (
    <div role="tablist" aria-orientation="vertical" className="flex w-[19px] shrink-0 flex-col gap-[5px] bg-[#181818] pr-[3px] pt-[5px]">
      <button role="tab" className="flex h-[41px] items-center justify-center rounded-r border border-l-0 border-[#363636] text-[#c8c8c8] [writing-mode:vertical-rl]">
        <span className="rotate-180">Node</span>
      </button>
      <button role="tab" className="flex h-[36px] items-center justify-center rounded-r border border-l-0 border-[#363636] text-[#c8c8c8] [writing-mode:vertical-rl]">
        <span className="rotate-180">Tool</span>
      </button>
      <button role="tab" className="flex h-10 items-center justify-center rounded-r border border-l-0 border-[#363636] text-[#c8c8c8] [writing-mode:vertical-rl]">
        <span className="rotate-180">View</span>
      </button>
      <button role="tab" aria-selected="true" className="flex h-[53px] items-center justify-center rounded-r border border-l-0 border-[#404040] bg-[#303030] text-white [writing-mode:vertical-rl]">
        <span className="rotate-180">Options</span>
      </button>
    </div>
  );
}

/* ---------- timeline ---------- */

const timelineWidth = 2113;
const frameLeft = (frame: number) => `${((69.6 + frame * 7.863) / timelineWidth) * 100}%`;
const labelled = Array.from({ length: 25 }, (_, i) => (i + 1) * 10);
const minor = Array.from({ length: 27 }, (_, i) => i * 10 - 5);

const transport = [
  ["first", "Jump to start"],
  ["prevKey", "Previous keyframe"],
  ["playBack", "Play reverse"],
  ["play", "Play"],
  ["nextKey", "Next keyframe"],
  ["last", "Jump to end"],
];

function Timeline() {
  return (
    <section className="relative flex h-[102px] shrink-0 flex-col overflow-hidden rounded-md bg-[#303030]">
      <div className="flex h-[25px] shrink-0 items-center justify-between pl-[7px] pr-[6px] pt-px text-[#e0e0e0]">
        <div className="flex flex-1 items-center">
          <TypeButton icon="clock" label="Timeline editor type" />
          <div className="ml-[5px] flex h-5 rounded border border-[#3d3d3d] bg-[#282828]">
            <button className="flex w-[69px] items-center justify-between border-r border-[#3d3d3d] pl-[7px]">
              Playback
              <Icon name="chevronDown" className="size-3" />
            </button>
            <button className="flex w-[59px] items-center justify-between pl-2">
              Keying
              <Icon name="chevronDown" className="size-3" />
            </button>
          </div>
          <button className="ml-[9px]">View</button>
          <button className="ml-4">Marker</button>
        </div>
        <div className="mr-6 flex items-center gap-[6px]">
          <div className="flex h-5 overflow-hidden rounded border border-[#3d3d3d]">
            <button aria-label="Auto keying" className="flex w-[19px] items-center justify-center bg-[#545454]">
              <Icon name="record" />
            </button>
            <button aria-label="Auto keying options" className="flex w-[19px] items-center justify-center bg-[#2b2b2b] text-[#4c4c4c]">
              <Icon name="chevronDown" className="size-3" />
            </button>
          </div>
          <div className="flex h-5 gap-px overflow-hidden rounded border border-[#3d3d3d]">
            {transport.map(([icon, label]) => (
              <button key={icon} aria-label={label} className="flex w-[19px] items-center justify-center bg-[#545454] text-[#eaeaea]">
                <Icon name={icon} className="size-[14px]" />
              </button>
            ))}
          </div>
        </div>
        <div className="flex flex-1 items-center justify-end gap-1.5">
          <input aria-label="Current frame" defaultValue="1" className="h-5 w-[75px] rounded border border-[#3d3d3d] bg-[#545454] text-center outline-none" />
          <div className="flex h-5 gap-px overflow-hidden rounded border border-[#3d3d3d]">
            <button aria-label="Use preview range" className="flex w-[18px] items-center justify-center bg-[#545454]">
              <Icon name="stopwatch" />
            </button>
            <label className="flex w-[87px] items-center bg-[#545454] px-[14px]">
              Start
              <input defaultValue="1" className="w-full min-w-0 flex-1 bg-transparent text-right outline-none" />
            </label>
            <label className="flex w-[83px] items-center bg-[#545454] px-[14px]">
              End
              <input defaultValue="250" className="w-full min-w-0 flex-1 bg-transparent text-right outline-none" />
            </label>
          </div>
        </div>
      </div>
      <div className="h-[23px] shrink-0 bg-[#1d1d1d]" />
      <div className="relative flex-1">
        <div className="absolute inset-y-0 left-0 bg-[#232323]" style={{ width: frameLeft(1) }} />
        <div className="absolute inset-y-0 right-0 bg-[#212121]" style={{ left: frameLeft(250) }} />
        {minor.map((f) => (
          <div key={f} className="absolute inset-y-0 w-px bg-black/25" style={{ left: frameLeft(f) }} />
        ))}
        {[0, ...labelled].map((f) => (
          <div key={f} className="absolute inset-y-0 w-px bg-[#161616]" style={{ left: frameLeft(f) }} />
        ))}
      </div>
      {labelled.map((f) => (
        <span key={f} className="absolute top-[29px] -translate-x-1/2 font-[DejaVu_Sans] text-[#a0a0a0]" style={{ left: frameLeft(f) }}>
          {f}
        </span>
      ))}
      <div className="absolute bottom-0 top-[44px] w-0.5 -translate-x-1/2 bg-[#4772b3]" style={{ left: frameLeft(1) }} />
      <div className="absolute top-7 flex h-[19px] w-[25px] -translate-x-1/2 items-center justify-center rounded bg-[#4772b3] font-[DejaVu_Sans] text-white" style={{ left: frameLeft(1) }}>
        1
      </div>
      <div className="absolute bottom-px left-2 right-2 flex h-[10px] items-center justify-between rounded-full bg-[#545454]">
        <span className="size-2 rounded-full border-2 border-[#6a6a6a] bg-[#333]" />
        <span className="size-2 rounded-full border-2 border-[#6a6a6a] bg-[#333]" />
      </div>
      <button aria-label="Show channels" className="absolute left-0 top-[39px] h-[14px] w-[7px] rounded-r bg-[#161616]">
        <svg viewBox="0 0 5 9" className="h-[9px] w-[5px]">
          <path d="m.8.5 3.5 4-3.5 4" fill="none" stroke="#8a8a8a" />
        </svg>
      </button>
      <div className="absolute right-0.5 top-[35px] h-[46px] w-[3px] rounded bg-[#303030]" />
      <svg viewBox="0 0 5 9" aria-hidden="true" className="absolute right-px top-[42px] h-[9px] w-[5px]">
        <path d="M4.2.5.8 4.5l3.4 4" fill="none" stroke="#8a8a8a" />
      </svg>
    </section>
  );
}

/* ---------- outliner ---------- */

function Toggles({ checkbox }: { checkbox?: boolean }) {
  return (
    <div className="ml-auto flex items-center pr-[9px] text-[#dcdcdc]">
      {checkbox && (
        <label className="flex w-5 justify-center">
          <input type="checkbox" aria-label="Include collection" defaultChecked className="peer sr-only" />
          <svg viewBox="0 0 11 11" className="size-[11px]">
            <rect width="11" height="11" rx="1.5" fill="currentColor" />
            <path d="m2.5 5.5 2.2 2.3L8.5 3" fill="none" stroke="#222" strokeWidth="1.5" />
          </svg>
        </label>
      )}
      <button aria-label="Hide in viewport" className="flex w-5 justify-center">
        <Icon name="eye" className="size-[14px]" />
      </button>
      <button aria-label="Disable in renders" className="flex w-5 justify-center">
        <Icon name="photo" className="size-[14px]" />
      </button>
    </div>
  );
}

function Triangle({ open }: { open?: boolean }) {
  return (
    <svg viewBox="0 0 8 8" aria-hidden="true" className="size-2 shrink-0 text-[#c0c0c0]">
      <path d={open ? "M.5 1h7L4 7.5Z" : "M1 .5v7L7.5 4Z"} fill="currentColor" />
    </svg>
  );
}

function Outliner() {
  const items = [
    { name: "Camera", icon: "camera", data: "cameraLine", active: true, selected: false },
    { name: "Cube", icon: "meshObject", data: "mesh", active: false, selected: true },
    { name: "Light", icon: "bulb", data: "lightData", active: false, selected: false },
  ];
  return (
    <section className="flex h-[437px] shrink-0 flex-col overflow-hidden rounded-md bg-[#282828] text-[#c0c0c0]">
      <div className="flex h-[26px] shrink-0 items-center bg-[#2b2b2b] pl-2 pr-[7px]">
        <TypeButton icon="outliner" label="Outliner editor type" />
        <div className="ml-[5px]">
          <TypeButton icon="layers" label="Display mode" />
        </div>
        <div className="flex flex-1 justify-center pr-9">
          <SearchBox label="Search outliner" />
        </div>
        <TypeButton icon="filter" label="Filter" />
        <button aria-label="New collection" className="ml-[5px] flex size-5 items-center justify-center rounded bg-[#545454] text-[#8f8f8f]">
          <Icon name="newCollection" />
        </button>
      </div>
      <div className="relative flex-1 bg-[repeating-linear-gradient(#282828_0_20px,#2b2b2b_20px_40px)] [--hole:#282828]">
        <div className="flex h-5 items-center pl-[23px]">
          <Icon name="collection" className="size-[15px] text-[#e0e0e0]" />
          <span className="ml-1.5 pt-0.5">Scene Collection</span>
        </div>
        <div className="flex h-5 items-center pl-[26px]">
          <Triangle open />
          <span className="ml-1.5 flex size-5 items-center justify-center rounded border border-[#666] bg-[#505050] text-[#e6e6e6]">
            <Icon name="collection" className="size-[15px]" />
          </span>
          <span className="ml-1 pt-0.5">Collection</span>
          <Toggles checkbox />
        </div>
        {items.map((it) => (
          <div key={it.name} className={`flex h-5 items-center pl-[46px] ${it.selected ? "bg-[#334d80] [--hole:#334d80]" : ""}`}>
            <Triangle />
            <span className={`ml-1.5 flex size-5 items-center justify-center rounded ${it.selected ? "bg-[#5f74a3] text-[#d08d68]" : "text-[#c27c47]"}`}>
              <Icon name={it.icon} className="size-4" />
            </span>
            <span className={`ml-1 pt-0.5 ${it.selected ? "text-[#ffab26]" : ""}`}>{it.name}</span>
            <span className={`ml-5 flex size-5 items-center justify-center rounded ${it.selected ? "text-[#17c5b0]" : "text-[#14b088]"} ${it.active ? "border border-[#6a6a6a] bg-[#555]" : ""}`}>
              <Icon name={it.data} className="size-4" />
            </span>
            <Toggles />
          </div>
        ))}
        <div className="absolute left-[29px] top-[45px] h-[50px] w-px bg-[#606060]" />
      </div>
    </section>
  );
}

/* ---------- properties ---------- */

const tabGroups = [
  [{ icon: "tool", color: "text-[#b8b8b8]" }],
  [
    { icon: "render", color: "text-[#b8b8b8]" },
    { icon: "output", color: "text-[#b8b8b8]" },
    { icon: "layers", color: "text-[#a8a8a8]" },
    { icon: "scene", color: "text-[#b8b8b8]" },
    { icon: "world", color: "text-[#b5525a]" },
  ],
  [{ icon: "collectionLine", color: "text-[#c8c8c8]" }],
  [
    { icon: "object", color: "text-[#e39650]" },
    { icon: "wrench", color: "text-[#5780cc]" },
    { icon: "particles", color: "text-[#5780cc]" },
    { icon: "physics", color: "text-[#5780cc]" },
    { icon: "constraint", color: "text-[#5780cc]" },
    { icon: "mesh", color: "text-[#10b382]" },
    { icon: "sphere", color: "text-[#b5525a]" },
  ],
  [{ icon: "texture", color: "text-[#b5525a]" }],
];

const panels = ["Relations", "Collections", "Instancing", "Motion Paths", "Visibility", "Viewport Display", "Line Art", "Custom Properties"];

const vectors = [
  { name: "Location", value: "0 m" },
  { name: "Rotation", value: "0°" },
  { name: "Scale", value: "1.000" },
];

function Vector({ name, value }: { name: string; value: string }) {
  return (
    <div className="flex flex-col gap-px overflow-hidden">
      {["X", "Y", "Z"].map((axis, i) => (
        <div key={axis} className="flex items-center">
          <label htmlFor={`${name}-${axis}`} className="w-[149px] shrink-0 pt-px text-right">
            {i === 0 ? `${name} X` : axis}
          </label>
          <input
            id={`${name}-${axis}`}
            defaultValue={value}
            className={`ml-2.5 min-w-0 flex-1 bg-[#545454] text-center font-[DejaVu_Sans] text-[#e6e6e6] outline-none ${i === 0 ? "h-[18px] rounded-t-[3px]" : i === 2 ? "h-[19px] rounded-b-[3px]" : "h-[19px]"}`}
          />
          <button aria-label={`Lock ${name} ${axis}`} className="ml-[3px] text-[#989898]">
            <Icon name="unlock" />
          </button>
          <Dot />
        </div>
      ))}
    </div>
  );
}

function Dot() {
  return (
    <button aria-label="Animate property" className="flex w-6 justify-center">
      <span className="size-1 rounded-full bg-[#d9d9d9]" />
    </button>
  );
}

function ChevronRight() {
  return (
    <svg viewBox="0 0 6 10" aria-hidden="true" className="h-2.5 w-1.5 shrink-0">
      <path d="m.6.5 4.6 4.5L.6 9.5" fill="none" stroke="#a0a0a0" strokeWidth="1.1" />
    </svg>
  );
}

function Properties() {
  return (
    <section className="flex min-h-0 flex-1 flex-col overflow-hidden rounded-md bg-[#303030] text-[#d9d9d9]">
      <div className="flex h-[25px] shrink-0 items-center pl-2 pr-[7px]">
        <TypeButton icon="properties" label="Properties editor type" />
        <div className="flex flex-1 justify-center pr-3">
          <SearchBox label="Search properties" />
        </div>
        <button aria-label="Options" className={`${box} size-5 justify-center`}>
          <Icon name="chevronDown" className="size-3" />
        </button>
      </div>
      <div className="flex min-h-0 flex-1">
        <div role="tablist" aria-orientation="vertical" className="w-7 shrink-0 bg-[#1d1d1d] pt-2">
          {tabGroups.map((group, g) => (
            <div key={g} className="mb-1 flex flex-col border-b border-[#141414] pb-[3px] pl-0.5">
              {group.map((t) => (
                <button
                  key={t.icon}
                  role="tab"
                  aria-label={t.icon}
                  className={`flex h-7 items-center rounded-l pl-1.5 ${t.color} ${t.icon === "object" ? "bg-[#303030]" : ""}`}
                >
                  <Icon name={t.icon} className="size-[15px]" />
                </button>
              ))}
            </div>
          ))}
        </div>
        <div className="min-w-0 flex-1 pl-2 pr-[7px] pt-2.5">
          <div className="flex items-center pl-[3px] pr-px">
            <Icon name="object" />
            <span className="ml-[7px] flex-1">Cube</span>
            <button aria-label="Pin" className="text-[#989898]">
              <Icon name="pin" />
            </button>
          </div>
          <div className="mt-[18px] flex h-5 overflow-hidden rounded border border-[#3d3d3d] bg-[#1d1d1d]">
            <button aria-label="Browse object" className="flex w-[31px] items-center justify-center border-r border-[#3d3d3d] bg-[#282828]">
              <Icon name="object" />
              <Icon name="chevronDown" className="size-3" />
            </button>
            <input aria-label="Object name" defaultValue="Cube" className="min-w-0 flex-1 bg-transparent pl-[7px] outline-none" />
          </div>
          <section className="mt-2.5 rounded-[5px] bg-[#3d3d3d] pb-px">
            <div className="flex h-[26px] items-center pl-2 pr-[7px] pt-px">
              <svg viewBox="0 0 10 7" aria-hidden="true" className="h-[7px] w-2.5">
                <path d="m.5.5 4.5 5 4.5-5" fill="none" stroke="#a0a0a0" strokeWidth="1.1" />
              </svg>
              <h2 className="ml-1 flex-1 text-[#e6e6e6]">Transform</h2>
              <Grip />
            </div>
            <div className="flex flex-col gap-[7px] pr-1.5 pt-2">
              <Vector {...vectors[0]} />
              <Vector {...vectors[1]} />
              <div className="flex items-center">
                <span className="mr-2.5 w-[149px] shrink-0 text-right">Mode</span>
                <Select label="Rotation mode" value="XYZ Euler" className="mr-[19px] h-[18px] flex-1" />
                <Dot />
              </div>
              <Vector {...vectors[2]} />
            </div>
            <button className="mt-[10px] flex h-[23px] items-center pl-[25px] pt-0.5 text-[#e6e6e6]">
              <ChevronRight />
              <span className="ml-[5px]">Delta Transform</span>
            </button>
          </section>
          <div className="mt-0.5 flex flex-col gap-0.5">
            {panels.map((p) => (
              <button key={p} className="flex h-[25px] items-center rounded-[5px] bg-[#3d3d3d] pl-[11px] pr-[7px] pt-0.5 text-left text-[#e6e6e6]">
                <ChevronRight />
                <span className="ml-[5px] flex-1">{p}</span>
                <Grip />
              </button>
            ))}
          </div>
        </div>
      </div>
    </section>
  );
}

/* ---------- page ---------- */

export default function App() {
  return (
    <div className="flex h-screen w-full flex-col overflow-hidden border-l border-[#8c8c8c] bg-[#161616] font-[DejaVu_Sans_Condensed,DejaVu_Sans,sans-serif] text-[11px] leading-4">
      <TopBar />
      <main className="flex min-h-0 flex-1 gap-[3px] px-px pb-px pt-0.5">
        <div className="flex min-w-0 flex-1 flex-col gap-[3px]">
          <section className="flex min-h-0 flex-1 flex-col overflow-hidden rounded-md bg-[#1d1d1d]">
            <EditorHeader />
            <div className="flex min-h-0 flex-1">
              <Canvas />
              <Sidebar />
              <SideTabs />
            </div>
          </section>
          <Timeline />
        </div>
        <div className="flex w-[442px] shrink-0 flex-col gap-[3px]">
          <Outliner />
          <Properties />
        </div>
      </main>
      <footer className="flex h-5 shrink-0 items-center bg-[#1d1d1d] pl-3 pr-2 pt-px text-[#8f8f8f]">
        <div className="flex w-[211px] items-center gap-[10px]">
          <Mouse part="left" />
          Select
        </div>
        <div className="flex w-[211px] items-center gap-[10px]">
          <Mouse part="middle" />
          Pan View
        </div>
        <div className="flex items-center gap-[10px]">
          <Mouse part="right" />
          Node Context Menu
        </div>
        <span className="ml-auto">3.3.3</span>
      </footer>
    </div>
  );
}
